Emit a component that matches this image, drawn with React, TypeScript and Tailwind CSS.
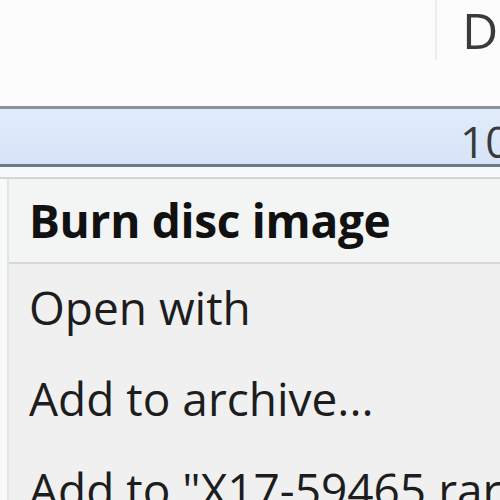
import React from "react";

type Item = { label: string; bold?: boolean; sepAfter?: boolean };

const items: Item[] = [
  { label: "Burn disc image", bold: true, sepAfter: true },
  { label: "Open with" },
  { label: "Add to archive..." },
  { label: 'Add to "X17-59465.rar"' },
];

const App: React.FC = () => {
  return (
    <div
      className="w-[500px] h-[500px] overflow-hidden bg-[#fcfcfc] text-[#1b1b1b]"
      style={{ fontFamily: '"Open Sans", "Noto Sans", sans-serif' }}
    >
      {/* column header */}
      <div className="h-[106px] flex">
        <div className="w-[435px] shrink-0" />
        <div className="h-[60px] shrink-0 border-l-2 border-[#ececec]" />
        <div className="pl-[25px] shrink-0 text-[50px] leading-[60px] text-[#3a3a3a] whitespace-nowrap">
          Date
        </div>
      </div>
      <div className="h-[3px] bg-[#8d9199]" />

      {/* selected file row */}
      <div className="h-[55px] flex bg-gradient-to-b from-[#e1ecfb] to-[#d6e4f8]">
        <div className="w-[460px] shrink-0" />
        <div className="shrink-0 text-[44px] leading-[64px] text-[#3a3a3a] whitespace-nowrap">
          10/12/2009
        </div>
      </div>
      <div className="h-[3px] bg-[#6e7a8c]" />
      <div className="h-[10px] bg-[#f6f8f9]" />

      {/* context menu */}
      <div className="flex border-t-2 border-[#d3d6d9] bg-[#f0f0f0]">
        <div className="w-[9px] shrink-0 bg-[#f7f9fa] border-r-2 border-[#e3e4e6]" />
        <div className="flex-1 min-w-0 flex flex-col">
          {items.map(({ label, bold, sepAfter }) => (
            <div
              key={label}
              className={
                sepAfter
                  ? "h-[85px] flex items-end pb-[14px] pl-[20px] border-b-2 border-[#d5d8db] bg-[#f3f4f4]"
                  : "h-[91px] flex items-center pb-[6px] pl-[20px]"
              }
            >
              <span
                className={
                  bold
                    ? "text-[46px] leading-[56px] font-bold tracking-[-0.3px] whitespace-nowrap text-[#111]"
                    : "text-[46px] leading-[56px] whitespace-nowrap text-[#1d1d1d]"
                }
              >
                {label}
              </span>
            </div>
          ))}
        </div>
      </div>
    </div>
  );
};

export default App;
